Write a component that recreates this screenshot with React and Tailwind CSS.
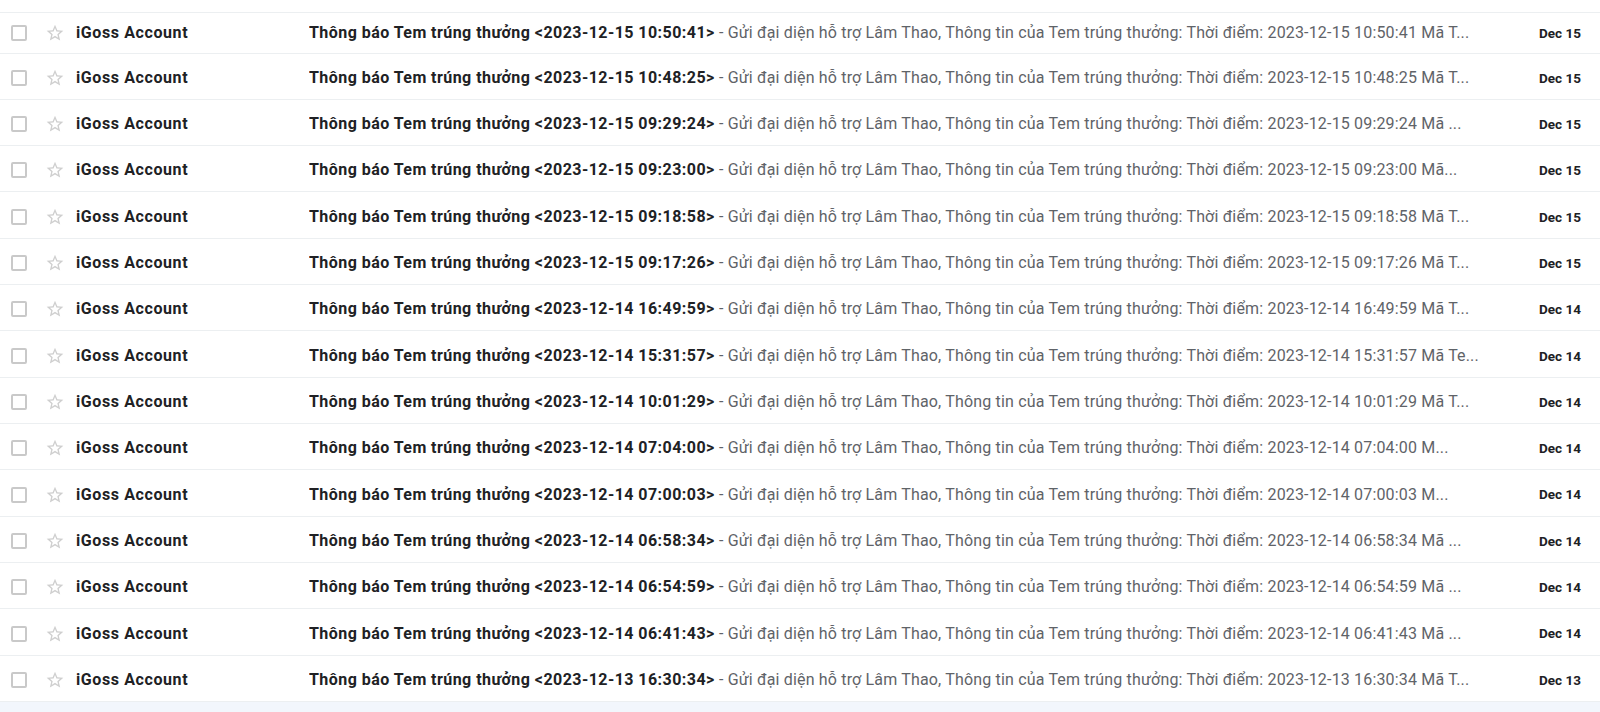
import React from "react";

const rows = [
  ["2023-12-15 10:50:41", "Mã T...", "Dec 15"],
  ["2023-12-15 10:48:25", "Mã T...", "Dec 15"],
  ["2023-12-15 09:29:24", "Mã ...", "Dec 15"],
  ["2023-12-15 09:23:00", "Mã...", "Dec 15"],
  ["2023-12-15 09:18:58", "Mã T...", "Dec 15"],
  ["2023-12-15 09:17:26", "Mã T...", "Dec 15"],
  ["2023-12-14 16:49:59", "Mã T...", "Dec 14"],
  ["2023-12-14 15:31:57", "Mã Te...", "Dec 14"],
  ["2023-12-14 10:01:29", "Mã T...", "Dec 14"],
  ["2023-12-14 07:04:00", "M...", "Dec 14"],
  ["2023-12-14 07:00:03", "M...", "Dec 14"],
  ["2023-12-14 06:58:34", "Mã ...", "Dec 14"],
  ["2023-12-14 06:54:59", "Mã ...", "Dec 14"],
  ["2023-12-14 06:41:43", "Mã ...", "Dec 14"],
  ["2023-12-13 16:30:34", "Mã T...", "Dec 13"],
];

function Star() {
  return (
    <svg viewBox="0 0 24 24" className="w-[20px] h-[20px]" fill="#cfcfcf">
      <path d="M22 9.24l-7.19-.62L12 2 9.19 8.63 2 9.24l5.46 4.73L5.82 21 12 17.27 18.18 21l-1.63-7.03L22 9.24zM12 15.4l-3.76 2.27 1-4.28-3.32-2.88 4.38-.38L12 6.1l1.71 4.04 4.38.38-3.32 2.88 1 4.28L12 15.4z" />
    </svg>
  );
}

function Row({ time, tail, date, first }) {
  return (
    <div
      className={
        "flex items-center border-b border-[#eceff1] bg-white " +
        (first ? "h-[40.5px] pt-[1px]" : "h-[46.33px] pt-[3px]")
      }
    >
      <div className="w-[76px] flex items-center shrink-0">
        <div className="ml-[11px] w-4 h-4 border-2 border-[#c9c9c9] rounded-[2px]" />
        <div className="ml-[18px] flex items-center">
          <Star />
        </div>
      </div>
      <div className="w-[233px] shrink-0 text-[16px] font-bold tracking-[0.6px] text-[#202124] whitespace-nowrap">
        iGoss Account
      </div>
      <div className="flex-1 min-w-0 overflow-hidden whitespace-nowrap text-[16px]">
        <span className="font-bold tracking-[0.45px] text-[#202124]">
          Thông báo Tem trúng thưởng &lt;{time}&gt;
        </span>
        <span className="text-[#5f6368] tracking-[0.17px]">
          {" "}- Gửi đại diện hỗ trợ Lâm Thao, Thông tin của Tem trúng thưởng: Thời điểm: {time} {tail}
        </span>
      </div>
      <div className="w-[100px] shrink-0 text-right pr-[19px] text-[13.5px] font-bold text-[#202124]">
        {date}
      </div>
    </div>
  );
}

export default function App() {
  return (
    <div
      className="w-[1600px] h-[712px] overflow-hidden bg-[#f2f6fc]"
      style={{ fontFamily: "Roboto, 'Noto Sans', sans-serif" }}
    >
      <div className="h-[13px] bg-white border-b border-[#eceff1]" />
      {rows.map((r, i) => (
        <Row key={i} time={r[0]} tail={r[1]} date={r[2]} first={i === 0} />
      ))}
    </div>
  );
}
